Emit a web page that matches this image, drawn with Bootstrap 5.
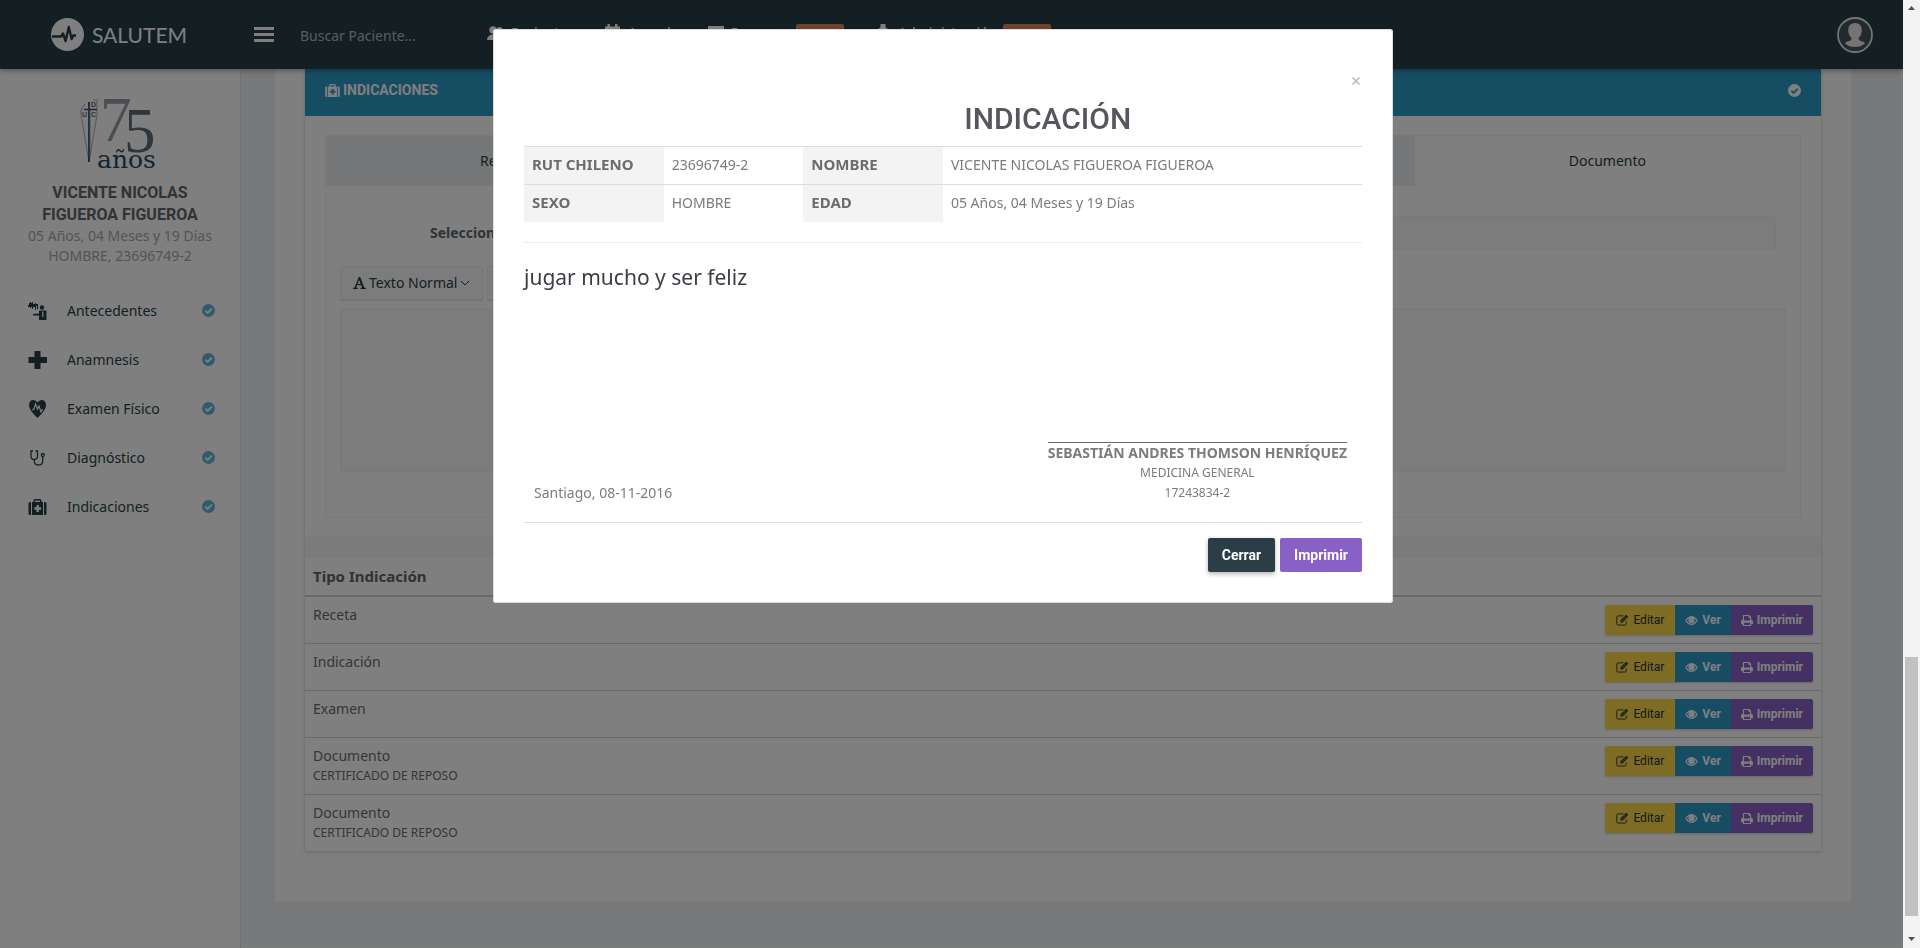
<!DOCTYPE html>
<html lang="es">
<head>
<meta charset="utf-8">
<meta name="viewport" content="width=device-width, initial-scale=1">
<title>Salutem - Indicaciones</title>
<link rel="stylesheet" href="https://cdn.jsdelivr.net/npm/bootstrap@5.3.0/dist/css/bootstrap.min.css">
<style>
  :root { --ink:#283e46; --blue:#2e9ac6; --purple:#8860c6; --line:#d2d2d2; }
  body { font-family:"Noto Sans","Open Sans",sans-serif; font-size:14px; line-height:20px; color:#6c6c6c; background:#eef0f2; }
  a { text-decoration:none; color:inherit; }
  svg { display:block; flex:none; }
  .heading-font { font-family:Roboto,sans-serif; }
  .app { min-height:100vh; min-width:0; }

  /* top bar */
  .topbar { height:69px; background:var(--ink); color:#fff; position:relative; z-index:2; box-shadow:0 2px 5px rgba(0,0,0,.3); }
  .brand-box { width:240px; padding-left:51px; gap:8px; }
  .brand-name { font:400 21px/24px Lato,sans-serif; color:#fff; }
  .burger { border:0; background:none; padding:0; margin-left:14px; }
  .search-box { width:172px; margin-left:26px; border:0; padding:2px 0 0; background:none; color:#fff; font-size:14px; }
  .search-box::placeholder { color:#b4b8ba; opacity:1; }
  .topnav { gap:30px; margin-left:15px; padding-bottom:3px; }
  .topnav a { display:flex; align-items:center; gap:6px; }
  .tag-new { background:#d88556; font-size:10px; line-height:18px; width:48px; text-align:center; border-radius:2px; color:#fff; }
  .avatar { margin-right:30px; border:0; padding:0; background:none; }

  /* sidebar */
  .side { width:241px; background:#fff; border-right:1px solid #e0e2e4; padding-top:26px; color:#a8a8ac; flex:none; }
  .side h1 { font-size:16px; line-height:22px; font-weight:700; color:#60666c; margin:9px 0 0; }
  .side-menu { padding-top:20px; }
  .side-menu a { height:49px; padding:0 25px 0 28px; color:var(--ink); }
  .side-menu span { margin-left:20px; }

  /* content */
  .sheet { margin:0 52px 44px 34px; padding:0 30px 50px; background:#fff; }
  .panel { box-shadow:0 1px 4px rgba(0,0,0,.2); background:#fff; }
  .panel-head { background:var(--blue); color:#fff; padding:10px 20px 15px; line-height:22px; font-weight:500; font-size:14px; }
  .panel-head svg:first-child { margin-right:3px; }
  .tab-box { margin:19px 20px 20px; border:1px solid #f2f2f2; height:383px; }
  .tab-box .nav-link { background:#eceef1; border-radius:0; color:var(--ink); line-height:20px; padding:15px 0; }
  .tab-box .nav-link.active { background:#fff; color:var(--ink); }
  .form-area { padding:30px 14px 0; }
  .form-area .form-control { background:#f8f8f8; border:1px solid #f0f0f0; border-radius:2px; }
  .doc-label { width:168px; font-weight:700; color:#60666c; margin-left:90px; flex:none; }
  .doc-input { height:34px; margin-right:10px; }
  .tool { background:#f9f9f9; border:1px solid #eee; box-shadow:0 1px 1px #ddd; border-radius:2px; height:34px; padding:0 12px; color:var(--ink); font-size:14px; gap:3px; }
  .editor { height:164px; resize:none; }
  .list-panel { border-top:20px solid #f6f6f6; }
  .kinds { margin:0; color:#6c6c6c; }
  .kinds > :not(caption) > * > * { padding:8px; border:0; background:none; color:inherit; box-shadow:none; }
  .kinds thead th { font-size:15px; line-height:21px; color:#60666c; border-bottom:2px solid var(--line); }
  .kinds tbody tr + tr td { border-top:1px solid var(--line); }
  .kinds small { font-size:12px; line-height:20px; display:block; }
  .act { border:0; border-radius:0; height:30px; padding:0 10px; font-size:12px; line-height:30px; font-weight:500; color:#fff; display:flex; align-items:center; gap:4px; }
  .act-edit { background:#fdd94b; color:#22343b; font-weight:400; border-radius:2px 0 0 2px; padding:0 11px; }
  .act-see { background:var(--blue); font-weight:700; }
  .act-print { background:var(--purple); font-weight:700; border-radius:0 2px 2px 0; }
  .acts { box-shadow:0 1px 2px rgba(0,0,0,.2); }
  .foot-line { height:3px; background:#fff; opacity:.5; }

  /* scroll rail beside the page */
  .rail { width:17px; background:#f3f3f3; position:relative; z-index:1060; padding:6px 2px 7px; height:100vh; flex:none; }
  .rail-thumb { width:13px; height:259px; background:#c1c1c1; margin-bottom:21px; }

  /* dialog */
  .sheet-modal { right:17px; width:auto; padding-right:17px; }
  .sheet-modal .modal-dialog { max-width:900px; margin:29px auto; }
  .sheet-modal .modal-content { border:1px solid #ddd; border-radius:2px; padding:30px; color:#7c7c7c; }
  .close-x { border:0; background:none; padding:0; width:12px; height:42px; }
  .dlg-title { font-size:30px; line-height:33px; font-weight:500; color:#56565c; margin-bottom:11px; }
  .who { margin:0; }
  .who > :not(caption) > * > * { padding:7px 8px 9px; line-height:21px; border:0; border-top:1px solid #ddd; background:none; color:#7c7c7c; box-shadow:none; }
  .who > tbody > tr > th { background:#f3f3f3; font-size:15px; color:#6c6c6c; }
  .dlg-rule { margin:20px 0; border-top:1px solid #eee; opacity:1; }
  .advice { font-size:21px; line-height:28px; color:#3c3c44; min-height:179px; margin:0; }
  .sign { border-top:1px solid #6c6c6c; text-align:center; line-height:20px; margin-right:15px; }
  .sign small { font-size:12px; display:block; }
  .place-date { padding-left:10px; }
  .dlg-foot { border-top:1px solid #ddd; margin-top:19px; padding-top:15px; gap:5px; }
  .dlg-btn { height:34px; padding:0 14px; font-size:14px; font-weight:700; border-radius:2px; color:#fff; border:0; }
  .btn-dark-ink, .btn-dark-ink:hover { background:#2b3d46; color:#fff; box-shadow:0 2px 5px rgba(0,0,0,.3); }
  .btn-violet, .btn-violet:hover { background:var(--purple); color:#fff; }
</style>
</head>
<body class="d-flex">

<svg width="0" height="0" class="position-absolute" aria-hidden="true">
  <symbol id="i-check" viewBox="0 0 16 16"><circle cx="8" cy="8" r="8" fill="currentColor"/><path d="M4 8.2l2.900 2.800 5.200-5.300" fill="none" stroke="var(--tick,#fff)" stroke-width="2.300"/></symbol>
  <symbol id="i-kit" viewBox="0 0 18 16"><path fill="currentColor" fill-rule="evenodd" d="M5 3V1.500Q5 0 6.500 0h5Q13 0 13 1.500V3h1.500v13h-11V3zM6.500 3h5V1.500h-5zM8 6v2.200H5.800v2.600H8V13h2.400v-2.200h2.200V8.200h-2.200V6zM2.500 3v13H1.500Q0 16 0 14.500v-10Q0 3 1.500 3zM15.500 3h1Q18 3 18 4.500v10q0 1.500-1.500 1.500h-1z"/></symbol>
  <symbol id="i-edit" viewBox="0 0 14 13"><path d="M11 8v2.500q0 1.500-1.500 1.500H2.300Q.8 12 .8 10.500v-7Q.8 2 2.300 2H8" fill="none" stroke="currentColor"/><path d="M4.800 9.200V6.800L11 .8l2.200 2.200-6.200 6.200z" fill="currentColor"/><path d="M6 7.800l5-5" stroke="#fdd94b" stroke-width=".7"/></symbol>
  <symbol id="i-eye" viewBox="0 0 14 10"><path fill="currentColor" fill-rule="evenodd" d="M0 5Q3 0 7 0t7 5q-3 5-7 5T0 5zm1.500 0Q4 8.800 7 8.800T12.500 5Q11.500 3.300 9.800 2.200 10.500 3.200 10.500 4.600A3.500 3.500 0 0 1 3.500 4.600Q3.500 3.200 4.200 2.200 2.500 3.300 1.500 5z"/></symbol>
  <symbol id="i-print" viewBox="0 0 13 12"><path fill="currentColor" fill-rule="evenodd" d="M2 0h7l2 2v3.200Q13 5.200 13 7v3h-2v2H2v-2H0V7q0-1.800 2-1.800zm1.300 1.200V6h6.500V3H8V1.200zM3.300 8.500v2.300h6.500V8.500z"/></symbol>
</svg>

<div class="app d-flex flex-column flex-grow-1">
  <header class="topbar d-flex align-items-center">
    <a href="#" class="brand-box d-flex align-items-center">
      <svg width="33" height="33" viewBox="0 0 33 33"><circle cx="16.500" cy="16.500" r="16.500" fill="#fff"/><path d="M1 18.500h9l2-3 2.600 7.500 3.200-14 2.800 12 1.600-3.500H25" fill="none" stroke="#283e46" stroke-width="2.400" stroke-linejoin="round"/></svg>
      <span class="brand-name">SALUTEM</span>
    </a>
    <button class="burger" type="button" aria-label="Menú"><svg width="20" height="15" viewBox="0 0 20 15"><path d="M0 0h20v3H0zM0 6h20v3H0zM0 12h20v3H0z" fill="#fff"/></svg></button>
    <input class="search-box" type="search" placeholder="Buscar Paciente..." aria-label="Buscar Paciente">
    <nav class="topnav d-flex">
      <a href="#"><svg width="18" height="14" viewBox="0 0 18 14"><circle cx="6" cy="4" r="3.700" fill="#fff"/><path d="M0 14q0-5 6-5.500 6 .5 6 5.500z" fill="#fff"/><circle cx="12.500" cy="4" r="3" fill="#fff"/></svg>Pacientes</a>
      <a href="#"><svg width="18" height="18" viewBox="0 0 18 18"><path d="M1 2.500h2.500V0H6v2.500h5V0h2.500v2.500H16V18H1z" fill="#fff"/></svg>Agenda</a>
      <a href="#"><svg width="16" height="14" viewBox="0 0 16 14"><path d="M0 0h16v14H0z" fill="#fff"/></svg>Recursos<span class="tag-new">Nuevo</span></a>
      <a href="#"><svg width="18" height="18" viewBox="0 0 18 18"><circle cx="9" cy="10" r="7" fill="#fff"/><path d="M6.500 0h5v5h-5z" fill="#fff"/></svg>Administración<span class="tag-new">Nuevo</span></a>
    </nav>
    <button class="avatar ms-auto" type="button" aria-label="Cuenta"><svg width="36" height="36" viewBox="0 0 36 36"><circle cx="18" cy="18" r="17" fill="#46545c" stroke="#e8e8ea" stroke-width="1.800"/><path d="M18 6q6.500 0 6.800 7 0 5-3.300 8 0 2.500 3 3.200 3 .6 3.500 2.300Q24 30 18 30T8 26.500q.5-1.700 3.500-2.300 3-.7 3-3.200-3.300-3-3.300-8Q11.500 6 18 6z" fill="#e8e8ea"/></svg></button>
  </header>

  <div class="d-flex flex-grow-1">
    <aside class="side">
      <div class="text-center px-3">
        <svg class="mx-auto" width="80" height="78" viewBox="0 0 80 78" role="img" aria-label="75 años">
          <path d="M1 20L9 67 17 20V5h-4M1 20V15L5 9" fill="none" stroke="#b8b8bc" stroke-width="1.200"/>
          <path d="M9 7v60" stroke="#203c58" stroke-width="1.600"/><path d="M10 14v48" stroke="#5aa0c4" stroke-width=".8"/><path d="M4 14.500h13" stroke="#46508c" stroke-width="1.600"/>
          <g font-family="Liberation Sans,sans-serif" font-size="7" font-weight="700" fill="#66666a"><text x="11" y="12">D</text><text x="2" y="22">U</text><text x="11" y="22">C</text></g>
          <g font-family="Liberation Serif,serif" font-size="63"><text x="20" y="46" fill="#9a99a4">7</text><text x="44" y="57" fill="#5c6c76">5</text></g>
          <text x="17" y="73" font-family="DejaVu Serif,serif" font-size="25" fill="#284a60">años</text>
        </svg>
        <h1 class="heading-font">VICENTE NICOLAS<br>FIGUEROA FIGUEROA</h1>
        <div>05 Años, 04 Meses y 19 Días</div>
        <div>HOMBRE, 23696749-2</div>
      </div>
      <nav class="side-menu d-flex flex-column">
        <a href="#" class="d-flex align-items-center"><svg width="19" height="18" viewBox="0 0 19 18" fill="#283e46"><path d="M1 1h1V0h1v1h1V0h1v2h2V1h1v1h2v5H9V4H8v4H7V5H5v2H4V5H3v1H2V5H0V3h1z"/><circle cx="14" cy="5.500" r="2.200"/><path d="M11 8.500h7.500V18H11v-4.500H5V12l6-.5zM14.200 9.500v5.500h1.200V9.500z" fill-rule="evenodd"/></svg><span>Antecedentes</span><svg class="ms-auto" width="13" height="13" style="color:#64b6d2"><use href="#i-check"/></svg></a>
        <a href="#" class="d-flex align-items-center"><svg width="19" height="18" viewBox="0 0 19 18" fill="#283e46"><path d="M6.500 0h6v6H19v6h-6.500v6h-6v-6H.5V6h6z"/></svg><span>Anamnesis</span><svg class="ms-auto" width="13" height="13" style="color:#64b6d2"><use href="#i-check"/></svg></a>
        <a href="#" class="d-flex align-items-center"><svg width="19" height="18" viewBox="0 0 19 18"><path d="M9.500 18Q1 10 1 5.500 1 0 5.500 0 8 0 9.500 2.500 11 0 13.500 0 18 0 18 5.500 18 10 9.500 18z" fill="#283e46"/><path d="M4 10l2-1 1.500-5 2 5 1.500-3 2 6 1.500-3" fill="none" stroke="#fff" stroke-width="1.200"/></svg><span>Examen Físico</span><svg class="ms-auto" width="13" height="13" style="color:#64b6d2"><use href="#i-check"/></svg></a>
        <a href="#" class="d-flex align-items-center"><svg width="19" height="18" viewBox="0 0 19 18" fill="none" stroke="#283e46" stroke-width="1.300"><path d="M5 2H3v5q0 3.500 3.300 3.500T9.500 7V2h-2M6.300 10.500V12q0 4 4.200 4t4.200-4V7.500"/><circle cx="14.800" cy="6" r="1.500"/></svg><span>Diagnóstico</span><svg class="ms-auto" width="13" height="13" style="color:#64b6d2"><use href="#i-check"/></svg></a>
        <a href="#" class="d-flex align-items-center"><svg width="19" height="16" color="#283e46"><use href="#i-kit"/></svg><span>Indicaciones</span><svg class="ms-auto" width="13" height="13" style="color:#64b6d2"><use href="#i-check"/></svg></a>
      </nav>
    </aside>

    <div class="flex-grow-1 d-flex flex-column">
      <main class="sheet">
        <section class="panel">
          <h2 class="panel-head heading-font d-flex align-items-center m-0">
            <svg width="15" height="13"><use href="#i-kit"/></svg><strong>INDICACIONES</strong>
            <svg class="ms-auto" width="13" height="13" style="--tick:#2e9ac6"><use href="#i-check"/></svg>
          </h2>
          <div class="overflow-hidden"><div class="tab-box">
            <ul class="nav nav-fill">
              <li class="nav-item"><a class="nav-link" href="#">Receta</a></li>
              <li class="nav-item"><a class="nav-link" href="#">Indicación</a></li>
              <li class="nav-item"><a class="nav-link" href="#">Examen</a></li>
              <li class="nav-item"><a class="nav-link active" href="#">Documento</a></li>
            </ul>
            <div class="form-area">
              <div class="d-flex align-items-center">
                <label class="doc-label" for="doc">Seleccione Formato</label>
                <input id="doc" class="form-control doc-input" type="text">
              </div>
              <div class="d-flex mt-3 mb-2 gap-1">
                <button type="button" class="tool d-flex align-items-center"><svg width="13" height="12" viewBox="0 0 13 12"><path fill="#283e46" fill-rule="evenodd" d="M5.800 0h1.400l4 10.500 1.800.5v1H7.500v-1l1.500-.5-.8-2.300H4l-.8 2.300 1.600.5v1H0v-1l1.500-.5zM6 2.800L4.500 7h3.200z"/></svg>Texto Normal<svg width="10" height="6" viewBox="0 0 10 6"><path d="M1 1l4 4 4-4" fill="none" stroke="#283e46"/></svg></button>
                <button type="button" class="tool"><strong>B</strong></button>
              </div>
              <textarea class="form-control editor" aria-label="Contenido"></textarea>
            </div>
          </div></div>
        </section>

        <section class="panel list-panel">
          <table class="table kinds">
            <thead><tr><th scope="col">Tipo Indicación</th><th></th></tr></thead>
            <tbody id="kindRows"></tbody>
          </table>
        </section>
      </main>
      <div class="foot-line mt-auto"></div>
    </div>
  </div>
</div>

<div class="rail d-flex flex-column align-items-center" aria-hidden="true">
  <svg width="7" height="4" viewBox="0 0 7 4"><path d="M0 4l3.500-4L7 4z" fill="#505050"/></svg>
  <div class="rail-thumb mt-auto"></div>
  <svg width="7" height="4" viewBox="0 0 7 4"><path d="M0 0l3.500 4L7 0z" fill="#505050"/></svg>
</div>

<div class="modal-backdrop show"></div>
<div class="modal sheet-modal show d-block" role="dialog" aria-labelledby="dlgTitle">
  <div class="modal-dialog">
    <div class="modal-content">
      <div class="d-flex justify-content-end">
        <button type="button" class="close-x" aria-label="Cerrar diálogo"><svg width="12" height="8" viewBox="0 0 12 8"><path d="M2.500.5l7 7M9.500.5l-7 7" stroke="#bbb" stroke-width="1.600"/></svg></button>
      </div>
      <div class="row g-0"><h3 id="dlgTitle" class="dlg-title heading-font col-9 offset-3 text-center">INDICACIÓN</h3></div>
      <table class="table who">
        <colgroup><col class="col-2"><col class="col-2"><col class="col-2"><col class="col-6"></colgroup>
        <tbody>
          <tr><th scope="row">RUT CHILENO</th><td>23696749-2</td><th scope="row">NOMBRE</th><td>VICENTE NICOLAS FIGUEROA FIGUEROA</td></tr>
          <tr><th scope="row">SEXO</th><td>HOMBRE</td><th scope="row">EDAD</th><td>05 Años, 04 Meses y 19 Días</td></tr>
        </tbody>
      </table>
      <hr class="dlg-rule">
      <p class="advice">jugar mucho y ser feliz</p>
      <div class="d-flex justify-content-between align-items-end">
        <div class="place-date">Santiago, 08-11-2016</div>
        <div class="sign"><strong>SEBASTIÁN ANDRES THOMSON HENRÍQUEZ</strong><small>MEDICINA GENERAL</small><small>17243834-2</small></div>
      </div>
      <div class="dlg-foot d-flex justify-content-end">
        <button type="button" class="btn dlg-btn btn-dark-ink heading-font">Cerrar</button>
        <button type="button" class="btn dlg-btn btn-violet heading-font">Imprimir</button>
      </div>
    </div>
  </div>
</div>

<script>
  const kinds = [['Receta'], ['Indicación'], ['Examen'], ['Documento', 'CERTIFICADO DE REPOSO'], ['Documento', 'CERTIFICADO DE REPOSO']];
  document.getElementById('kindRows').innerHTML = kinds.map(([name, note]) => `
    <tr><td>${name}${note ? `<small>${note}</small>` : ''}</td>
    <td><div class="d-flex justify-content-end"><div class="acts d-flex heading-font">
      <button type="button" class="act act-edit"><svg width="13" height="12"><use href="#i-edit"/></svg>Editar</button>
      <button type="button" class="act act-see"><svg width="13" height="9"><use href="#i-eye"/></svg>Ver</button>
      <button type="button" class="act act-print"><svg width="12" height="11"><use href="#i-print"/></svg>Imprimir</button>
    </div></div></td></tr>`).join('');
</script>
<script src="https://cdn.jsdelivr.net/npm/bootstrap@5.3.0/dist/js/bootstrap.bundle.min.js"></script>
</body>
</html>
